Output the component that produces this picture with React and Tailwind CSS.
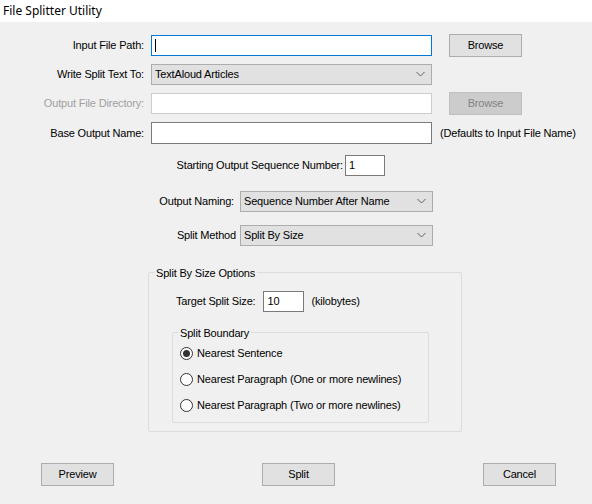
import React from "react";

function Chevron() {
  return (
    <svg width="9" height="6" viewBox="0 0 9 6" className="shrink-0">
      <path d="M0.5 1 L4.5 5 L8.5 1" fill="none" stroke="#606060" strokeWidth="1" />
    </svg>
  );
}

function Combo({ value, className }) {
  return (
    <div
      className={
        "h-[21px] bg-[#e1e1e1] border border-[#adadad] flex items-center justify-between pl-[3px] pr-[6px] " +
        className
      }
    >
      <span>{value}</span>
      <Chevron />
    </div>
  );
}

function Button({ children, disabled, className }) {
  return (
    <div
      className={
        "h-[23px] w-[73px] flex items-center justify-center border " +
        (disabled
          ? "bg-[#cccccc] border-[#bfbfbf] text-[#838383] "
          : "bg-[#e1e1e1] border-[#adadad] text-black ") +
        className
      }
    >
      {children}
    </div>
  );
}

function Radio({ checked, label }) {
  return (
    <div className="flex items-center h-[20px]">
      <div className="w-[13px] h-[13px] rounded-full border border-[#333333] bg-white flex items-center justify-center">
        {checked && <div className="w-[7px] h-[7px] rounded-full bg-[#333333]" />}
      </div>
      <span className="ml-[4px]">{label}</span>
    </div>
  );
}

export default function App() {
  return (
    <div
      className="w-[592px] h-[504px] bg-[#f0f0f0] text-[11px] tracking-[-0.17px] text-black overflow-hidden"
      style={{ fontFamily: '"Liberation Sans", Arial, sans-serif' }}
    >
      {/* TITLE BAR */}
      <div
        className="h-[22px] bg-white flex items-center pl-[3px] text-[12px] tracking-normal"
        style={{ fontFamily: '"Noto Sans", "Liberation Sans", sans-serif' }}
      >
        File Splitter Utility
      </div>

      {/* INPUT FILE PATH */}
      <div className="mt-[12px] h-[22px] flex items-center">
        <div className="w-[144px] text-right">Input File Path:</div>
        <div className="ml-[7px] w-[281px] h-[21px] bg-white border border-[#0078d7] flex items-center pl-[3px]">
          <div className="w-[1px] h-[13px] bg-black" />
        </div>
        <Button className="ml-[17px]">Browse</Button>
      </div>

      {/* WRITE SPLIT TEXT TO */}
      <div className="mt-[7px] h-[22px] flex items-center">
        <div className="w-[144px] text-right">Write Split Text To:</div>
        <Combo value="TextAloud Articles" className="ml-[7px] w-[281px]" />
      </div>

      {/* OUTPUT FILE DIRECTORY */}
      <div className="mt-[7px] h-[22px] flex items-center">
        <div className="w-[144px] text-right text-[#a0a0a0]">Output File Directory:</div>
        <div className="ml-[7px] w-[281px] h-[21px] bg-white border border-[#cccccc]" />
        <Button disabled className="ml-[17px]">
          Browse
        </Button>
      </div>

      {/* BASE OUTPUT NAME */}
      <div className="mt-[8px] h-[22px] flex items-center">
        <div className="w-[144px] text-right">Base Output Name:</div>
        <div className="ml-[7px] w-[281px] h-[22px] bg-white border border-[#7a7a7a]" />
        <span className="ml-[8px]">(Defaults to Input File Name)</span>
      </div>

      {/* STARTING SEQUENCE */}
      <div className="mt-[10px] h-[22px] flex items-center">
        <div className="w-[343px] text-right">Starting Output Sequence Number:</div>
        <div className="ml-[2px] w-[40px] h-[21px] bg-white border border-[#7a7a7a] flex items-center pl-[3px]">
          1
        </div>
      </div>

      {/* OUTPUT NAMING */}
      <div className="mt-[14px] h-[22px] flex items-center">
        <div className="w-[234px] text-right">Output Naming:</div>
        <Combo value="Sequence Number After Name" className="ml-[6px] w-[193px]" />
      </div>

      {/* SPLIT METHOD */}
      <div className="mt-[12px] h-[22px] flex items-center">
        <div className="w-[236px] text-right">Split Method</div>
        <Combo value="Split By Size" className="ml-[4px] w-[193px]" />
      </div>

      {/* SPLIT BY SIZE OPTIONS */}
      <div className="mt-[26px] ml-[148px] w-[314px] h-[160px] border border-[#dcdcdc] rounded-[2px] relative">
        <span className="absolute -top-[8px] left-[5px] px-[2px] bg-[#f0f0f0]">Split By Size Options</span>

        <div className="mt-[17px] h-[22px] flex items-center pl-[27px]">
          <span>Target Split Size:</span>
          <div className="ml-[8px] w-[41px] h-[21px] bg-white border border-[#7a7a7a] flex items-center pl-[3px]">
            10
          </div>
          <span className="ml-[7px]">(kilobytes)</span>
        </div>

        <div className="mt-[20px] ml-[23px] w-[257px] h-[91px] border border-[#dcdcdc] rounded-[2px] relative">
          <span className="absolute -top-[8px] left-[5px] px-[2px] bg-[#f0f0f0]">Split Boundary</span>
          <div className="pt-[10px] pl-[7px] flex flex-col gap-[6px]">
            <Radio checked label="Nearest Sentence" />
            <Radio label="Nearest Paragraph (One or more newlines)" />
            <Radio label="Nearest Paragraph (Two or more newlines)" />
          </div>
        </div>
      </div>

      {/* BOTTOM BUTTONS */}
      <div className="mt-[31px] flex items-center">
        <Button className="ml-[41px] w-[72px]">Preview</Button>
        <Button className="ml-[148px] w-[72px]">Split</Button>
        <Button className="ml-[148px] w-[72px]">Cancel</Button>
      </div>
    </div>
  );
}
